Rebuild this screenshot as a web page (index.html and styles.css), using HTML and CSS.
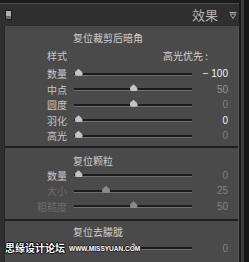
FILE: index.html
```html
<!DOCTYPE html>
<html lang="zh">
<head>
  <meta charset="UTF-8">
  <title>效果</title>
  <link rel="stylesheet" href="styles.css">
</head>
<body>

<div class="panel">
  <div class="main">
    <div class="topbar"></div>
    <div class="header">
      <span class="toggle"></span>
      <span class="header-title">效果</span>
      <svg class="header-arrow" width="8" height="7" viewBox="0 0 8 7">
        <path d="M0.5 0.5h7" stroke="#a8a8a8" stroke-width="1"/>
        <path d="M1.2 2l2.8 4.5 2.8-4.5z" fill="none" stroke="#a8a8a8" stroke-width="1"/>
      </svg>
    </div>

    <div class="content">
      <div class="group">
        <div class="group-title">复位裁剪后暗角</div>
        <div class="style-row">
          <span class="label">样式</span>
          <span class="select">高光优先 :</span>
        </div>
        <div class="slider-row">
          <span class="label">数量</span>
          <div class="track"><span class="thumb" style="--pos:0"></span></div>
          <span class="value bright">− 100</span>
        </div>
        <div class="slider-row">
          <span class="label">中点</span>
          <div class="track"><span class="thumb" style="--pos:0.5"></span></div>
          <span class="value mid">50</span>
        </div>
        <div class="slider-row">
          <span class="label">圆度</span>
          <div class="track"><span class="thumb" style="--pos:0.5"></span></div>
          <span class="value">0</span>
        </div>
        <div class="slider-row">
          <span class="label">羽化</span>
          <div class="track"><span class="thumb" style="--pos:0"></span></div>
          <span class="value bright">0</span>
        </div>
        <div class="slider-row">
          <span class="label">高光</span>
          <div class="track"><span class="thumb" style="--pos:0"></span></div>
          <span class="value">0</span>
        </div>
      </div>

      <div class="separator"></div>

      <div class="group grain">
        <div class="group-title">复位颗粒</div>
        <div class="slider-row">
          <span class="label">数量</span>
          <div class="track"><span class="thumb" style="--pos:0"></span></div>
          <span class="value">0</span>
        </div>
        <div class="slider-row disabled">
          <span class="label">大小</span>
          <div class="track"><span class="thumb" style="--pos:0.25"></span></div>
          <span class="value">25</span>
        </div>
        <div class="slider-row disabled">
          <span class="label">粗糙度</span>
          <div class="track"><span class="thumb" style="--pos:0.5"></span></div>
          <span class="value">50</span>
        </div>
      </div>

      <div class="separator second"></div>

      <div class="group haze">
        <div class="group-title">复位去朦胧</div>
        <div class="slider-row">
          <span class="label"></span>
          <div class="track"><span class="thumb" style="--pos:0.5"></span></div>
          <span class="value">0</span>
          <span class="watermark">思缘设计论坛</span>
          <span class="watermark-url">WWW.MISSYUAN.COM</span>
        </div>
      </div>
    </div>
  </div>
  <div class="scrollbar"></div>
</div>

</body>
</html>
```

FILE: styles.css
```css
body {
  margin: 0;
  background: #151515;
  font-family: "Noto Sans CJK SC", "Noto Sans", sans-serif;
}

.panel {
  display: flex;
  width: 249px;
  height: 262px;
  overflow: hidden;
}

.main {
  width: 239px;
  background: #2f2f2f;
  display: flex;
  flex-direction: column;
}

.topbar {
  height: 3px;
  background: #1b1b1b;
  border-bottom: 1px solid #4a4a4a;
}

.header {
  height: 22px;
  display: flex;
  align-items: center;
  padding: 0 2px 0 5px;
}

.toggle {
  width: 5px;
  height: 8px;
  background: linear-gradient(#b0b0b0 0 60%, #6a6a6a 60%);
  border: 1px solid #1e1e1e;
}

.header-title {
  margin-left: auto;
  font-size: 13px;
  line-height: 14px;
  color: #b3b3b3;
}

.header-arrow {
  margin-left: 11px;
  display: block;
}

.content {
  flex: 1;
  margin-left: 4px;
  background: #4a4a4a;
  border-left: 1px solid #262626;
  border-right: 1px solid #5a5a5a;
}

.group-title {
  padding-left: 68px;
  margin-top: 5px;
  font-size: 10px;
  line-height: 14px;
  color: #cdcdcd;
}

.grain .group-title {
  margin-top: 6px;
}

.haze .group-title {
  margin-top: 4px;
  margin-bottom: 2px;
}

.label {
  font-size: 10px;
  line-height: 12px;
  color: #c8c8c8;
  text-align: right;
}

.style-row {
  display: grid;
  grid-template-columns: 62px 1fr;
  align-items: center;
  height: 14px;
  margin: 4px 0 3.5px;
}

.select {
  justify-self: end;
  margin-right: 30px;
  font-size: 10px;
  line-height: 12px;
  color: #d2d2d2;
}

.slider-row {
  position: relative;
  display: grid;
  grid-template-columns: 62px 118px 1fr;
  column-gap: 7px;
  align-items: center;
  height: 15.5px;
  padding-right: 10px;
}

.track {
  position: relative;
  height: 2px;
  background: #1c1c1c;
  border-bottom: 1px solid #707070;
}

.thumb {
  position: absolute;
  bottom: -1px;
  left: calc(4.5px + var(--pos) * 110px);
  width: 8px;
  height: 7px;
  transform: translateX(-50%);
  background: #c4c4c4;
  border-radius: 1px 1px 2px 2px;
  clip-path: polygon(50% 0, 85% 35%, 100% 65%, 100% 100%, 0 100%, 0 65%, 15% 35%);
}

.value {
  justify-self: end;
  font-family: "Liberation Sans", Arial, sans-serif;
  font-size: 10px;
  line-height: 12px;
  color: #808080;
}

.value.mid {
  color: #939393;
}

.value.bright {
  color: #f2f2f2;
}

.disabled .label {
  color: #6a6a6a;
}

.disabled .thumb {
  background: #8a8a8a;
}

.separator {
  height: 2px;
  margin-top: 2px;
  background: #1f1f1f;
}

.separator.second {
  margin-top: 4.5px;
}

.watermark {
  position: absolute;
  left: 0;
  top: 1px;
  font-size: 10px;
  line-height: 12px;
  font-weight: bold;
  color: #fff;
  text-shadow: -1px 0 #000, 1px 0 #000, 0 -1px #000, 0 1px #000;
}

.watermark-url {
  position: absolute;
  left: 64px;
  top: 4px;
  font-family: "Liberation Sans", Arial, sans-serif;
  font-size: 6.5px;
  line-height: 7px;
  font-weight: bold;
  color: #fff;
  text-shadow: -1px 0 #222, 1px 0 #222, 0 -1px #222, 0 1px #222;
}

.scrollbar {
  width: 10px;
  background: linear-gradient(to right, #1a1a1a 0 2px, #3a3a3a 2px 5px, #151515 5px);
}
```
